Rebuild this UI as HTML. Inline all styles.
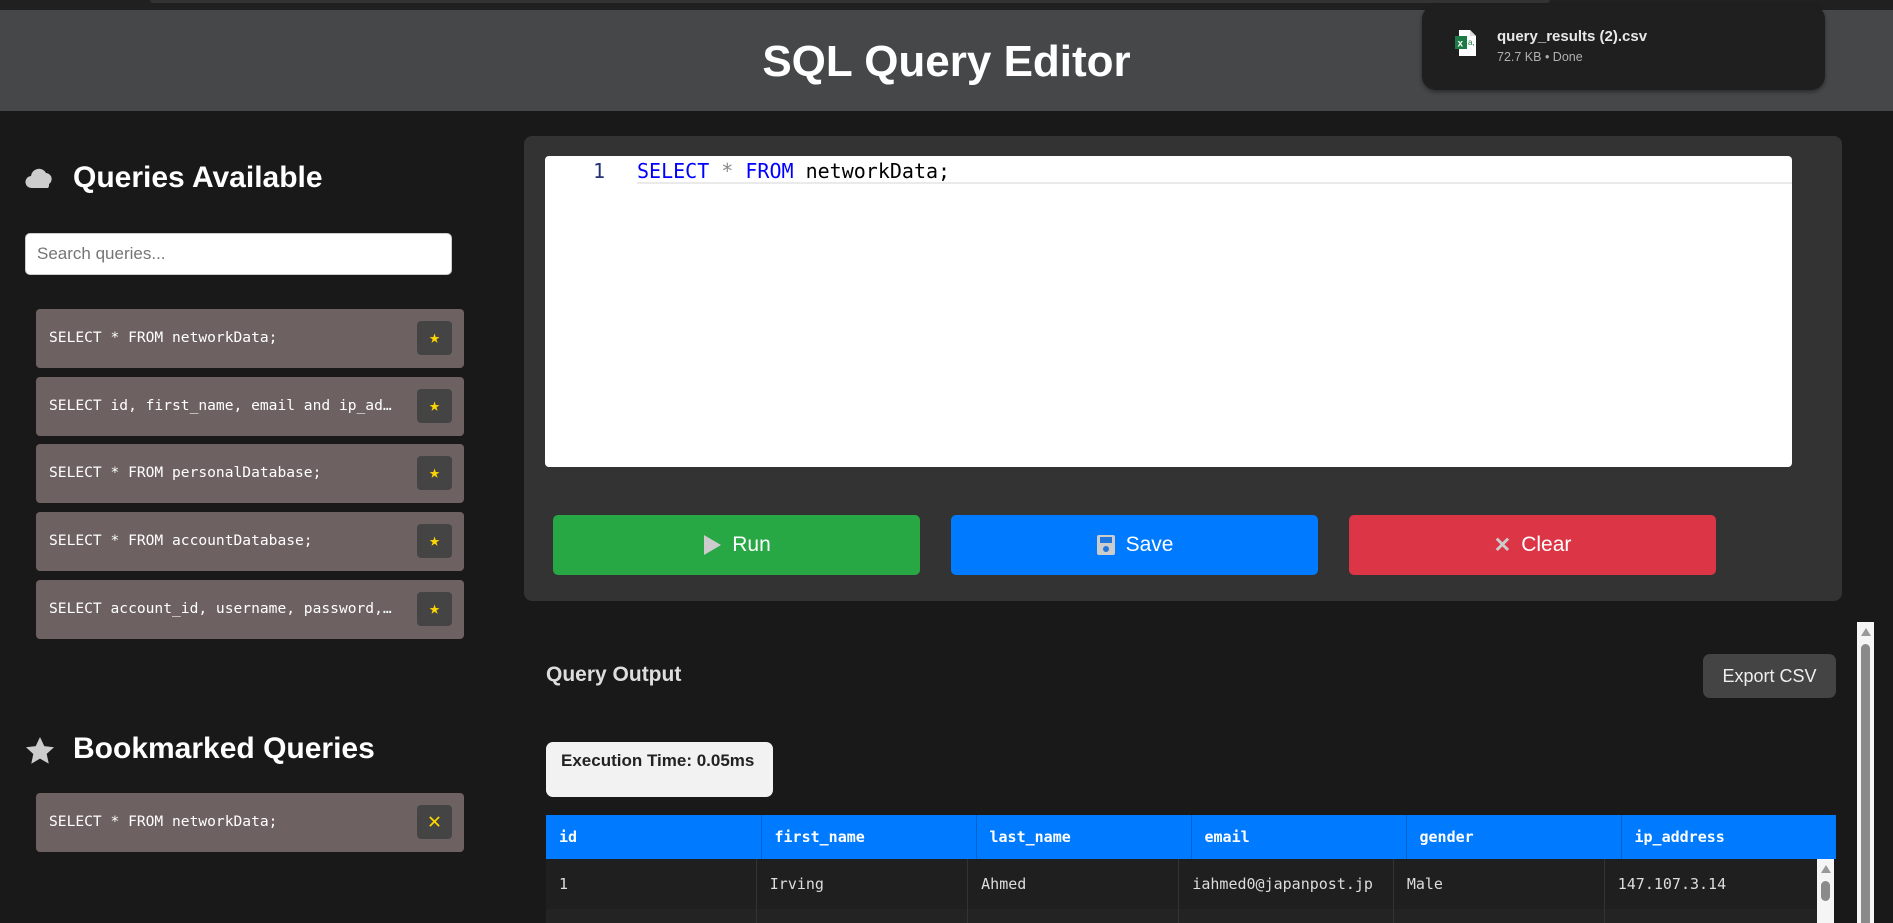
<!DOCTYPE html>
<html><head><meta charset="utf-8"><style>
*{box-sizing:border-box;margin:0;padding:0}
html{overflow:hidden;width:1893px;height:923px}
body{width:1893px;height:923px;overflow:hidden;background:#191919;font-family:"Liberation Sans",Arial,sans-serif;position:relative}
.abs{position:absolute}
.mono{font-family:"DejaVu Sans Mono","Liberation Mono",monospace}
.topbar{left:0;top:0;width:1893px;height:10px;background:#202020}
.topbar i{position:absolute;left:150px;top:0;width:1400px;height:3px;background:#333;border-radius:0 0 8px 8px}
.header{left:0;top:10px;width:1893px;height:101px;background:#464749}
.title{left:0;width:1893px;top:37px;text-align:center;color:#fff;font-weight:bold;font-size:44px}
.popup{left:1422px;top:5px;width:403px;height:85px;background:#1f1f1f;border-radius:14px;box-shadow:0 2px 4px rgba(0,0,0,.4)}
.h2{color:#fff;font-weight:bold;font-size:30px}
.search{left:25px;top:233px;width:427px;height:42px;background:#fff;border-radius:5px;border:1px solid #ccc;color:#757575;font-size:17px;padding:10px 11px}
.item{left:36px;width:428px;height:59px;background:#6d6261;border-radius:4px;color:#fff;font-size:14.6px;padding:20px 13px;white-space:nowrap}
.star{position:absolute;left:381px;top:12px;width:35px;height:34px;background:#444;border-radius:4px;color:#ffd700;font-size:18px;text-align:center;line-height:34px}
.panel{left:524px;top:136px;width:1318px;height:465px;background:#333;border-radius:8px}
.editor{left:545px;top:156px;width:1247px;height:311px;background:#fff;border-radius:4px}
.btn{top:515px;width:367px;height:60px;border-radius:5px;color:#fff;font-size:21px;display:flex;align-items:center;justify-content:center;gap:10px}
th,td{width:215px;text-align:left;padding-left:13px}
</style></head><body>
<div class="abs topbar"><i></i></div>
<div class="abs header"></div>
<div class="abs title">SQL Query Editor</div>
<div class="abs popup">
  <svg class="abs" style="left:33px;top:25px" width="22" height="26" viewBox="0 0 22 26"><path d="M4 0h11l6 6v20H4z" fill="#fff"/><path d="M15 0v6h6" fill="#ddd"/><rect x="0" y="6" width="12" height="13" fill="#1d7a45"/><text x="2.5" y="16.5" font-size="10" font-family="Liberation Sans" font-weight="bold" fill="#fff">x</text><text x="13" y="15" font-size="8" fill="#1d7a45" font-family="Liberation Sans">a,</text></svg>
  <div class="abs" style="left:75px;top:23px;color:#e8e8e8;font-size:15px;font-weight:bold">query_results (2).csv</div>
  <div class="abs" style="left:75px;top:45px;color:#b0b0b0;font-size:12.5px">72.7 KB • Done</div>
</div>

<svg class="abs" style="left:25px;top:167px" width="30" height="22" viewBox="0 0 30 22"><path d="M7 21a6 6 0 0 1-1-12 8 8 0 0 1 15-3 6 6 0 0 1 3 11 5 5 0 0 1-1 4z" fill="#ccc"/></svg>
<div class="abs h2" style="left:73px;top:161px">Queries Available</div>
<div class="abs search">Search queries...</div>

<div class="abs item mono" style="top:309px">SELECT * FROM networkData;<div class="star">★</div></div>
<div class="abs item mono" style="top:377px">SELECT id, first_name, email and ip_ad…<div class="star">★</div></div>
<div class="abs item mono" style="top:444px">SELECT * FROM personalDatabase;<div class="star">★</div></div>
<div class="abs item mono" style="top:512px">SELECT * FROM accountDatabase;<div class="star">★</div></div>
<div class="abs item mono" style="top:580px">SELECT account_id, username, password,…<div class="star">★</div></div>

<svg class="abs" style="left:25px;top:737px" width="30" height="28" viewBox="0 0 24 23"><path d="M12 0l3.5 7.5 8 .9-6 5.5 1.7 8L12 17.8 4.8 22l1.7-8-6-5.6 8-.9z" fill="#ccc"/></svg>
<div class="abs h2" style="left:73px;top:732px">Bookmarked Queries</div>
<div class="abs item mono" style="top:793px">SELECT * FROM networkData;<div class="star" style="font-size:22px;font-weight:300">✕</div></div>

<div class="abs panel"></div>
<div class="abs editor">
  <div class="abs mono" style="left:48px;top:3px;font-size:20px;color:#237">1</div>
  <div class="abs" style="left:92px;top:0;width:1155px;height:28px;border-bottom:2px solid #eaeaea"></div>
  <div class="abs mono" style="left:92px;top:3px;font-size:20px;color:#000;white-space:pre"><span style="color:#00f">SELECT</span> <span style="color:#888">*</span> <span style="color:#00f">FROM</span> networkData;</div>
</div>
<div class="abs btn" style="left:553px;background:#28a745"><svg width="20" height="22" viewBox="0 0 20 22"><path d="M2 1l17 10L2 21z" fill="#ccc"/></svg>Run</div>
<div class="abs btn" style="left:951px;background:#007bff"><svg width="20" height="22" viewBox="0 0 20 22"><rect x="1" y="1" width="18" height="20" rx="2" fill="#ccc"/><rect x="4" y="3" width="12" height="6" fill="#2277dd"/><circle cx="10" cy="15" r="3" fill="#2277dd"/></svg>Save</div>
<div class="abs btn" style="left:1349px;background:#dc3545"><span style="color:#ccc;font-weight:bold">✕</span>Clear</div>

<div class="abs" style="left:546px;top:663px;color:#ddd;font-weight:bold;font-size:21px">Query Output</div>
<div class="abs" style="left:1703px;top:654px;width:133px;height:44px;background:#444;border-radius:7px;color:#eee;font-size:18px;text-align:center;line-height:44px">Export CSV</div>
<div class="abs" style="left:1857px;top:622px;width:17px;height:301px;background:#f5f5f5;overflow:hidden"><div class="abs" style="left:4px;top:6px;width:0;height:0;border-left:5px solid transparent;border-right:5px solid transparent;border-bottom:8px solid #999"></div><div class="abs" style="left:4px;top:22px;width:9px;height:290px;background:#8a8a8a;border-radius:5px"></div></div>

<div class="abs" style="left:546px;top:742px;width:227px;height:55px;background:#f2f2f2;border-radius:7px;color:#222;font-weight:bold;font-size:17px;padding:9px 15px">Execution Time: 0.05ms</div>

<table class="abs mono" style="left:546px;top:815px;width:1290px;border-collapse:collapse;font-size:15px">
<tr style="background:#007bff;color:#fff;height:44px;font-weight:bold"><th>id</th><th style="border-left:1px solid #0062cc">first_name</th><th style="border-left:1px solid #0062cc">last_name</th><th style="border-left:1px solid #0062cc">email</th><th style="border-left:1px solid #0062cc">gender</th><th style="border-left:1px solid #0062cc">ip_address</th></tr>
</table>
<div class="abs" style="left:546px;top:859px;width:1271px;height:64px;overflow:hidden">
<table class="mono" style="width:1271px;border-collapse:collapse;font-size:15px;color:#ddd">
<tr style="background:#1f1f1f;height:50px"><td style="width:211px">1</td><td style="width:212px;border-left:1px solid #333">Irving</td><td style="width:212px;border-left:1px solid #333">Ahmed</td><td style="width:212px;border-left:1px solid #333">iahmed0@japanpost.jp</td><td style="width:212px;border-left:1px solid #333">Male</td><td style="border-left:1px solid #333">147.107.3.14</td></tr>
<tr style="background:#232323;height:50px"><td></td><td style="border-left:1px solid #333"></td><td style="border-left:1px solid #333"></td><td style="border-left:1px solid #333"></td><td style="border-left:1px solid #333"></td><td style="border-left:1px solid #333"></td></tr>
</table></div>
<div class="abs" style="left:1817px;top:859px;width:17px;height:64px;background:#f5f5f5"><div class="abs" style="left:4px;top:6px;width:0;height:0;border-left:5px solid transparent;border-right:5px solid transparent;border-bottom:8px solid #999"></div><div class="abs" style="left:4px;top:22px;width:9px;height:20px;background:#8a8a8a;border-radius:5px"></div></div>
</body></html>
